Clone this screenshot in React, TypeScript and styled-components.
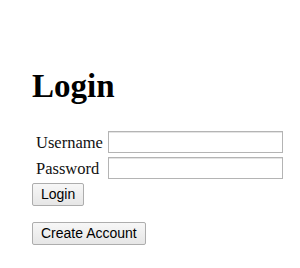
import React from "react";
import styled, { createGlobalStyle } from "styled-components";

const Global = createGlobalStyle`
  html, body { margin: 0; padding: 0; background: #ffffff; }
  body { font-family: "Liberation Serif", "Times New Roman", serif; color: #000; }
`;

const Page = styled.div`
  padding: 67px 16px 0 32px;
  display: flex;
  flex-direction: column;
  align-items: flex-start;
`;

const Heading = styled.h1`
  margin: 0 0 26px 0;
  font-family: "Liberation Serif", "Times New Roman", serif;
  font-weight: bold;
  font-size: 33px;
  line-height: 38px;
  color: #000;
`;

const Form = styled.form`
  display: flex;
  flex-direction: column;
  align-items: flex-start;
  margin: 0;
`;

const Fields = styled.div`
  display: grid;
  grid-template-columns: auto 175px;
  column-gap: 5px;
  row-gap: 4px;
  align-items: center;
`;

const Label = styled.label`
  padding-left: 4px;
  font-family: "Liberation Serif", "Times New Roman", serif;
  font-size: 16.5px;
  line-height: 19px;
  color: #111;
`;

const Input = styled.input`
  box-sizing: border-box;
  width: 175px;
  height: 22px;
  margin: 0;
  padding: 0 4px;
  border: 1px solid #b4b4b4;
  border-radius: 0;
  background: #fff;
  font-family: "Liberation Sans", Arial, sans-serif;
  font-size: 14px;
  box-shadow: inset 0 1px 0 #e4e4e4;
`;

const Button = styled.button<{ $top: number }>`
  box-sizing: border-box;
  margin: ${(p) => p.$top}px 0 0 0;
  height: 23px;
  padding: 0 8px;
  border: 1px solid #adadad;
  border-radius: 2px;
  background: linear-gradient(#f7f7f7, #e6e6e6);
  font-family: "Liberation Sans", Arial, sans-serif;
  font-size: 14px;
  line-height: 21px;
  color: #000;
`;

export default function App() {
  return (
    <>
      <Global />
      <Page>
        <Heading>Login</Heading>
        <Form onSubmit={(e) => e.preventDefault()}>
          <Fields>
            <Label htmlFor="u">Username</Label>
            <Input id="u" type="text" />
            <Label htmlFor="p">Password</Label>
            <Input id="p" type="password" />
          </Fields>
          <Button type="submit" $top={4}>Login</Button>
        </Form>
        <Button type="button" $top={16}>Create Account</Button>
      </Page>
    </>
  );
}
